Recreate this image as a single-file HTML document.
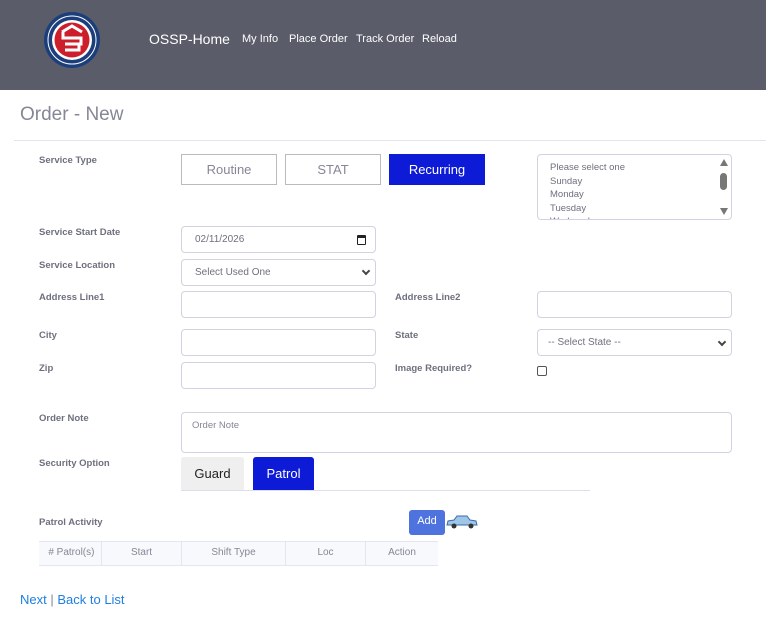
<!DOCTYPE html>
<html><head><style>
*{box-sizing:border-box;margin:0;padding:0}
body{width:766px;height:617px;background:#fff;font-family:"Liberation Sans",sans-serif;position:relative;overflow:hidden;color:#858796}
.a{position:absolute}
.hdr{left:0;top:0;width:766px;height:90px;background:#5a5c69}
.nav{color:#fff;font-size:11px;top:33px}
.lbl{left:39px;font-size:9.5px;font-weight:bold;color:#6e707e}
.inp{border:1px solid #d1d3e2;border-radius:4px;background:#fff;height:27px}
.btn{border:1px solid #bbb;background:#fff;font-size:13px;color:#858796;text-align:center;line-height:29px;height:31px;top:154px}
.th{top:542px;height:24px;font-size:10px;color:#858796;text-align:center;line-height:22px;background:#f8f9fc;border-right:1px solid #e3e6f0}
.sel{font-size:10px;color:#6e707e;padding-left:13px;line-height:25px}
.chev{position:absolute;right:6px;top:8px;width:6px;height:6px;border-right:2px solid #444;border-bottom:2px solid #444;transform:rotate(45deg)}
</style></head><body>
<div class="a hdr"></div>
<svg class="a" style="left:43px;top:11px" width="58" height="58" viewBox="0 0 58 58">
<circle cx="29" cy="29" r="28" fill="#1c3f7c"/><circle cx="29" cy="29" r="24" fill="none" stroke="#fff" stroke-width="1"/>
<circle cx="29" cy="29" r="20" fill="#fff"/><circle cx="29" cy="29" r="17.5" fill="#cc1f2b"/>
<path d="M19 21 L29 15 L39 21 M20 21 V27 H38 V33 H22 M36 33 V39 H22" stroke="#fff" stroke-width="3" fill="none"/>
</svg>
<div class="a" style="left:149px;top:31px;color:#fff;font-size:14px">OSSP-Home</div>
<div class="a nav" style="left:242px">My Info</div>
<div class="a nav" style="left:289px">Place Order</div>
<div class="a nav" style="left:356px">Track Order</div>
<div class="a nav" style="left:422px">Reload</div>
<div class="a" style="left:20px;top:104px;font-size:19px;color:#858796">Order - New</div>
<div class="a" style="left:14px;top:140px;width:752px;height:1px;background:#e3e6f0"></div>

<div class="a lbl" style="top:155px">Service Type</div>
<div class="a btn" style="left:181px;width:96px">Routine</div>
<div class="a btn" style="left:285px;width:96px">STAT</div>
<div class="a btn" style="left:389px;width:96px;background:#0d1ad6;border-color:#0d1ad6;color:#fff">Recurring</div>
<div class="a inp" style="left:537px;top:154px;width:195px;height:66px;overflow:hidden;font-size:9.5px;color:#6e707e;padding:6px 0 0 12px;line-height:13.5px">Please select one<br>Sunday<br>Monday<br>Tuesday<br>Wednesday
<div class="a" style="right:3px;top:4px;width:0;height:0;border-left:4px solid transparent;border-right:4px solid transparent;border-bottom:7px solid #777"></div>
<div class="a" style="right:4px;top:18px;width:7px;height:17px;background:#777;border-radius:4px"></div>
<div class="a" style="right:3px;bottom:4px;width:0;height:0;border-left:4px solid transparent;border-right:4px solid transparent;border-top:7px solid #777"></div></div>

<div class="a lbl" style="top:227px">Service Start Date</div>
<div class="a inp sel" style="left:181px;top:226px;width:195px;line-height:26px">02/11/2026<div class="a" style="right:9px;top:8px;width:9px;height:10px;border:1.5px solid #222;border-top-width:3px;border-radius:1px"></div></div>
<div class="a lbl" style="top:260px">Service Location</div>
<div class="a inp sel" style="left:181px;top:259px;width:195px;line-height:26px">Select Used One<div class="chev"></div></div>

<div class="a lbl" style="top:292px">Address Line1</div>
<div class="a inp" style="left:181px;top:291px;width:195px"></div>
<div class="a lbl" style="left:395px;top:292px">Address Line2</div>
<div class="a inp" style="left:537px;top:291px;width:195px"></div>

<div class="a lbl" style="top:330px">City</div>
<div class="a inp" style="left:181px;top:329px;width:195px"></div>
<div class="a lbl" style="left:395px;top:330px">State</div>
<div class="a inp sel" style="left:537px;top:329px;width:195px;padding-left:10px;line-height:26px">-- Select State --<div class="chev" style="top:9px"></div></div>

<div class="a lbl" style="top:363px">Zip</div>
<div class="a inp" style="left:181px;top:362px;width:195px"></div>
<div class="a lbl" style="left:395px;top:363px">Image Required?</div>
<div class="a" style="left:537px;top:366px;width:10px;height:10px;border:1px solid #555;border-radius:2px"></div>

<div class="a lbl" style="top:413px">Order Note</div>
<div class="a inp" style="left:181px;top:412px;width:551px;height:41px;font-size:9.5px;color:#858796;padding:7px 0 0 10px">Order Note</div>
<div class="a lbl" style="top:458px">Security Option</div>
<div class="a" style="left:181px;top:457px;width:63px;height:33px;background:#efefef;font-size:13px;color:#222;text-align:center;line-height:33px;border-radius:3px 3px 0 0">Guard</div>
<div class="a" style="left:253px;top:457px;width:61px;height:33px;background:#0d1ad6;font-size:13px;color:#fff;text-align:center;line-height:33px;border-radius:3px 3px 0 0">Patrol</div>
<div class="a" style="left:181px;top:490px;width:409px;height:1px;background:#dddfeb"></div>

<div class="a lbl" style="top:517px">Patrol Activity</div>
<div class="a" style="left:409px;top:510px;width:36px;height:25px;background:#4e73df;border-radius:3px;color:#fff;font-size:11px;text-align:center;line-height:22px">Add</div>
<svg class="a" style="left:445px;top:514px" width="33" height="15" viewBox="0 0 33 15"><path d="M2 11 L3 7 L9 6 L12 2 H22 L25 6 L31 7 L32 11 Z" fill="#9fc6e8" stroke="#3a6ea5"/><circle cx="9" cy="12" r="2.5" fill="#333"/><circle cx="26" cy="12" r="2.5" fill="#333"/></svg>

<div class="a" style="left:39px;top:541px;width:399px;height:1px;background:#e3e6f0"></div>
<div class="a th" style="left:39px;width:63px">&nbsp;# Patrol(s)</div>
<div class="a th" style="left:102px;width:80px">Start</div>
<div class="a th" style="left:182px;width:104px">Shift Type</div>
<div class="a th" style="left:286px;width:80px">Loc</div>
<div class="a th" style="left:366px;width:72px;border-right:none">Action</div>
<div class="a" style="left:39px;top:565px;width:399px;height:1px;background:#e3e6f0"></div>

<div class="a" style="left:20px;top:592px;font-size:13px;color:#1e7fe0">Next <span style="color:#858796">|</span> Back to List</div>
</body></html>
